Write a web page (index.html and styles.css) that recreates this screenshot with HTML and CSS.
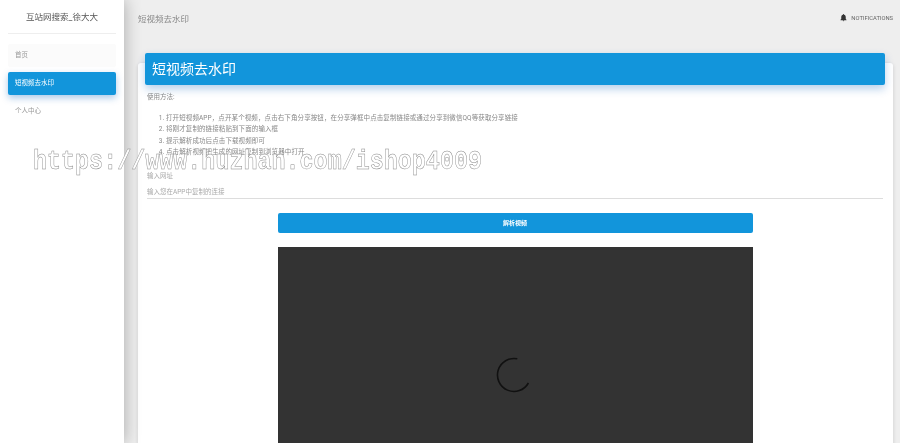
FILE: index.html
```html
<!DOCTYPE html>
<html lang="en">
<head>
    <meta charset="UTF-8">
    <meta name="viewport" content="width=device-width, initial-scale=1.0">
    <title>短视频去水印</title>
    <link rel="stylesheet" href="styles.css">
</head>
<body>

    <div class="sidebar">
        <div class="brand">互站网搜索_徐大大</div>
        <ul class="nav">
            <li class="nav-item nav-home">首页</li>
            <li class="nav-item nav-active">短视频去水印</li>
            <li class="nav-item">个人中心</li>
        </ul>
    </div>

    <div class="main">
        <div class="topbar">
            <span class="topbar-title">短视频去水印</span>
            <span class="topbar-link">
                <svg class="bell" viewBox="0 0 24 24"><path d="M12 22c1.1 0 2-.9 2-2h-4c0 1.1.89 2 2 2zm6-6v-5c0-3.07-1.64-5.64-4.5-6.32V4c0-.83-.67-1.5-1.5-1.5s-1.5.67-1.5 1.5v.68C7.63 5.36 6 7.92 6 11v5l-2 2v1h16v-1l-2-2z"/></svg>
                NOTIFICATIONS
            </span>
        </div>

        <div class="content">
            <div class="card">
                <div class="card-header">短视频去水印</div>
                <div class="card-body">
                    <p class="usage-title">使用方法:</p>
                    <ol class="usage-list">
                        <li>打开短视频APP，点开某个视频，点击右下角分享按钮，在分享弹框中点击复制链接或通过分享到微信QQ等获取分享链接</li>
                        <li>将刚才复制的链接粘贴到下面的输入框</li>
                        <li>提示解析成功后点击下载视频即可</li>
                        <li>点击解析视频把生成的网址复制到浏览器中打开</li>
                    </ol>
                    <label class="field-label" for="url">输入网址</label>
                    <input class="field-input" type="text" id="url" placeholder="输入您在APP中复制的连接">
                    <div class="player-wrap">
                        <button class="parse-btn">解析视频</button>
                        <div class="player">
                            <svg class="spinner" viewBox="0 0 40 40"><path d="M23.3 3.8A16.5 16.5 0 1 0 34.4 28"/></svg>
                        </div>
                    </div>
                </div>
            </div>
        </div>
    </div>

    <div class="watermark">https://www.huzhan.com/ishop4009</div>

</body>
</html>
```

FILE: styles.css
```css
html, body {
    height: 100%;
}

body {
    font-family: Roboto, "Noto Sans CJK SC", sans-serif;
    margin: 0;
    padding: 0;
    background-color: #eee;
    color: #777;
    display: flex;
    overflow: hidden;
    filter: blur(0.35px);
}

.sidebar {
    width: 124px;
    flex-shrink: 0;
    background-color: #fff;
    box-shadow: 0 0 16px rgba(0, 0, 0, 0.3);
    position: relative;
    z-index: 2;
}

.brand {
    margin: 0 8px;
    height: 33px;
    line-height: 35px;
    border-bottom: 1px solid #eee;
    text-align: center;
    font-size: 8.5px;
    color: #555;
}

.nav {
    list-style: none;
    margin: 10px 8px 0;
    padding: 0;
}

.nav-item {
    height: 23px;
    line-height: 23px;
    margin-bottom: 5px;
    padding-left: 7px;
    font-size: 6.5px;
    color: #999;
    border-radius: 2px;
}

.nav-home {
    background-color: #fbfbfb;
}

.nav-active {
    background-color: #1295db;
    color: #fff;
    box-shadow: 0 3px 7px rgba(18, 100, 190, 0.35);
}

.main {
    flex: 1;
    min-width: 0;
    height: 100%;
    overflow: hidden;
}

.topbar {
    height: 35px;
    display: flex;
    justify-content: space-between;
    align-items: center;
    padding: 0 7px 0 14px;
}

.topbar-title {
    font-size: 8.5px;
    color: #888;
}

.topbar-link {
    display: flex;
    align-items: center;
    gap: 3px;
    font-size: 5.8px;
    color: #666;
}

.bell {
    width: 9px;
    height: 9px;
    fill: #333;
}

.content {
    padding: 28px 7px 0 14px;
}

.card {
    background-color: #fff;
    border-radius: 3px;
    box-shadow: 0 1px 4px rgba(0, 0, 0, 0.14);
}

.card-header {
    position: relative;
    top: -10px;
    margin: 0 8px -10px 7px;
    height: 32px;
    line-height: 32px;
    padding-left: 7px;
    background-color: #1295db;
    color: #fff;
    font-size: 14px;
    border-radius: 2px;
    box-shadow: 0 4px 8px rgba(18, 100, 190, 0.3);
}

.card-body {
    padding: 7px 10px 0 9px;
}

.usage-title {
    margin: 0;
    font-size: 6.5px;
    line-height: 11px;
    color: #888;
}

.usage-list {
    margin: 10px 0 13px;
    padding-left: 19px;
    font-size: 6.5px;
    line-height: 11.3px;
    letter-spacing: 0.1px;
    color: #888;
}

.field-label {
    display: block;
    font-size: 6.5px;
    line-height: 11px;
    color: #aaa;
}

.field-input {
    display: block;
    box-sizing: border-box;
    width: 100%;
    height: 14px;
    margin: 3px 0 0;
    padding: 0;
    border: none;
    border-bottom: 1px solid #ddd;
    outline: none;
    font-family: inherit;
    font-size: 6.5px;
}

.field-input::placeholder {
    color: #aaa;
}

.player-wrap {
    width: 475px;
    margin: 14px auto 0;
}

.parse-btn {
    display: block;
    width: 100%;
    height: 20px;
    padding: 0 0 2px;
    border: none;
    border-radius: 2px;
    background-color: #1295db;
    color: #fff;
    font-family: inherit;
    font-size: 6px;
    font-weight: 700;
}

.player {
    height: 256px;
    margin-top: 14px;
    background-color: #333;
    display: flex;
    align-items: center;
    justify-content: center;
}

.spinner {
    width: 40px;
    height: 40px;
    margin-right: 3px;
    fill: none;
    stroke: #111;
    stroke-width: 1.6;
}

.watermark {
    position: absolute;
    left: 33px;
    top: 144px;
    z-index: 3;
    font-family: "Liberation Mono", monospace;
    font-size: 28px;
    font-weight: 700;
    line-height: 36px;
    white-space: nowrap;
    color: rgba(255, 255, 255, 0.9);
    -webkit-text-stroke: 0.5px #888;
    transform: scaleX(0.835);
    transform-origin: left top;
}
```
